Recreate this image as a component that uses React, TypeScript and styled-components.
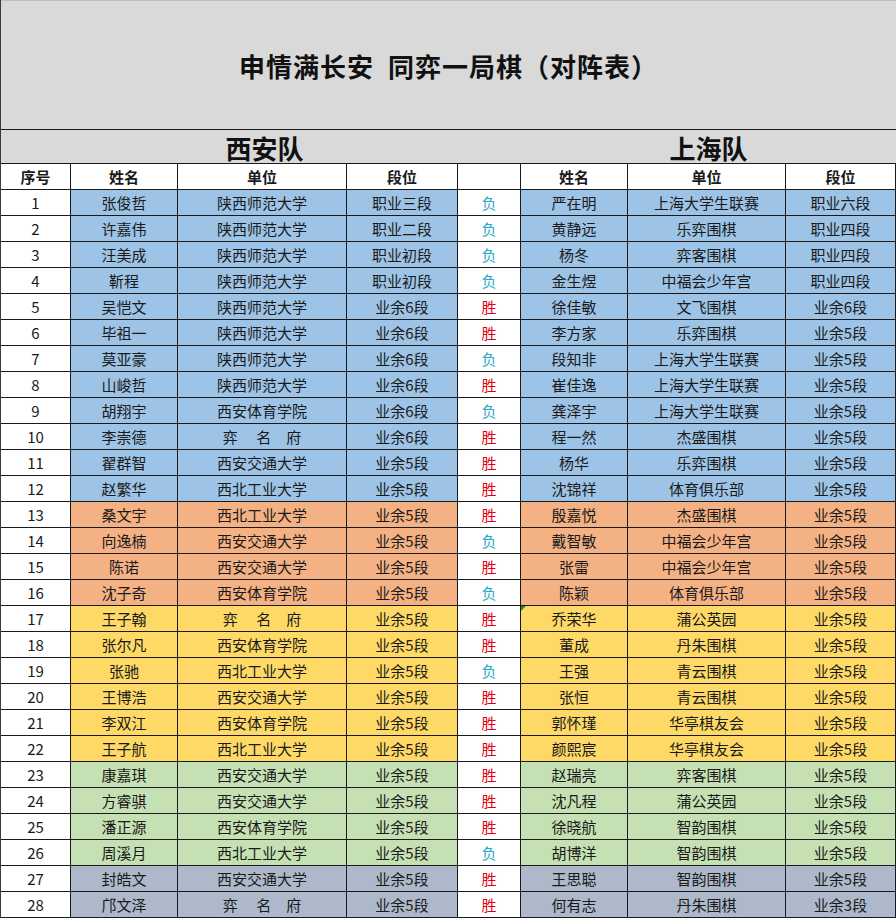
import React from "react";
import styled, { createGlobalStyle } from "styled-components";

const GlobalStyle = createGlobalStyle`
  body {
    margin: 0;
    background: #ffffff;
    font-family: "Noto Sans CJK SC", "Noto Sans", sans-serif;
  }
`;

const COLUMNS = "70px 107px 169px 111px 63px 107px 158px 110px";

const GROUP_COLORS: Record<string, string> = {
  blue: "#9dc3e6",
  orange: "#f4b183",
  yellow: "#ffd966",
  green: "#c5e0b3",
  slate: "#adb9ca",
};

const Sheet = styled.div`
  width: 896px;
  border-left: 1px solid #3a3a3a;
  box-sizing: border-box;
`;

const TitleBar = styled.div`
  height: 130px;
  background: #d9d9d9;
  border-top: 1px solid #bcbcbc;
  border-bottom: 1px solid #1a1a1a;
  box-sizing: border-box;
  display: flex;
  align-items: center;
  justify-content: center;
`;

const Title = styled.h1`
  margin: 0;
  font-size: 26px;
  font-weight: 700;
  color: #111;
  white-space: pre;
  letter-spacing: 1px;
`;

const TeamRow = styled.div`
  height: 34px;
  background: #d9d9d9;
  border-bottom: 1px solid #1a1a1a;
  box-sizing: border-box;
  display: grid;
  grid-template-columns: 70px 387px 63px 375px;
`;

const TeamName = styled.div`
  display: flex;
  align-items: flex-end;
  justify-content: center;
  font-size: 26px;
  font-weight: 700;
  color: #111;
  line-height: 1;
  padding-bottom: 2px;
`;

const Row = styled.div`
  display: grid;
  grid-template-columns: ${COLUMNS};
  height: 26px;
`;

const Cell = styled.div<{ $bg?: string; $color?: string; $bold?: boolean; $flag?: boolean }>`
  position: relative;
  box-sizing: border-box;
  border-right: 1px solid #1a1a1a;
  border-bottom: 1px solid #1a1a1a;
  background: ${(p) => p.$bg || "#ffffff"};
  color: ${(p) => p.$color || "#1a1a1a"};
  font-size: 15px;
  font-weight: ${(p) => (p.$bold ? 700 : 400)};
  display: flex;
  align-items: center;
  justify-content: center;
  white-space: pre;
  line-height: 1;

  ${(p) =>
    p.$flag &&
    `
    &::before {
      content: "";
      position: absolute;
      left: 0;
      top: 0;
      border-top: 5px solid #1f8a3a;
      border-right: 5px solid transparent;
    }
  `}
`;

type Match = {
  no: number;
  group: keyof typeof GROUP_COLORS;
  xName: string;
  xUnit: string;
  xRank: string;
  result: "胜" | "负";
  sName: string;
  sUnit: string;
  sRank: string;
};

const YMF = "弈\u3000 名\u3000府";

const raw: [string, string, string, "胜" | "负", string, string, string][] = [
  ["张俊哲", "陕西师范大学", "职业三段", "负", "严在明", "上海大学生联赛", "职业六段"],
  ["许嘉伟", "陕西师范大学", "职业二段", "负", "黄静远", "乐弈围棋", "职业四段"],
  ["汪美成", "陕西师范大学", "职业初段", "负", "杨冬", "弈客围棋", "职业四段"],
  ["靳程", "陕西师范大学", "职业初段", "负", "金生煜", "中福会少年宫", "职业四段"],
  ["吴恺文", "陕西师范大学", "业余6段", "胜", "徐佳敏", "文飞围棋", "业余6段"],
  ["毕祖一", "陕西师范大学", "业余6段", "胜", "李方家", "乐弈围棋", "业余5段"],
  ["莫亚豪", "陕西师范大学", "业余6段", "负", "段知非", "上海大学生联赛", "业余5段"],
  ["山峻哲", "陕西师范大学", "业余6段", "胜", "崔佳逸", "上海大学生联赛", "业余5段"],
  ["胡翔宇", "西安体育学院", "业余6段", "负", "龚泽宇", "上海大学生联赛", "业余5段"],
  ["李崇德", YMF, "业余6段", "胜", "程一然", "杰盛围棋", "业余5段"],
  ["翟群智", "西安交通大学", "业余5段", "胜", "杨华", "乐弈围棋", "业余5段"],
  ["赵繁华", "西北工业大学", "业余5段", "胜", "沈锦祥", "体育俱乐部", "业余5段"],
  ["桑文宇", "西北工业大学", "业余5段", "胜", "殷嘉悦", "杰盛围棋", "业余5段"],
  ["向逸楠", "西安交通大学", "业余5段", "负", "戴智敏", "中福会少年宫", "业余5段"],
  ["陈诺", "西安交通大学", "业余5段", "胜", "张雷", "中福会少年宫", "业余5段"],
  ["沈子奇", "西安体育学院", "业余5段", "负", "陈颖", "体育俱乐部", "业余5段"],
  ["王子翰", YMF, "业余5段", "胜", "乔荣华", "蒲公英园", "业余5段"],
  ["张尔凡", "西安体育学院", "业余5段", "胜", "董成", "丹朱围棋", "业余5段"],
  ["张驰", "西北工业大学", "业余5段", "负", "王强", "青云围棋", "业余5段"],
  ["王博浩", "西安交通大学", "业余5段", "胜", "张恒", "青云围棋", "业余5段"],
  ["李双江", "西安体育学院", "业余5段", "胜", "郭怀瑾", "华亭棋友会", "业余5段"],
  ["王子航", "西北工业大学", "业余5段", "胜", "颜熙宸", "华亭棋友会", "业余5段"],
  ["康嘉琪", "西安交通大学", "业余5段", "胜", "赵瑞亮", "弈客围棋", "业余5段"],
  ["方睿骐", "西安交通大学", "业余5段", "胜", "沈凡程", "蒲公英园", "业余5段"],
  ["潘正源", "西安体育学院", "业余5段", "胜", "徐晓航", "智韵围棋", "业余5段"],
  ["周溪月", "西北工业大学", "业余5段", "负", "胡博洋", "智韵围棋", "业余5段"],
  ["封皓文", "西安交通大学", "业余5段", "胜", "王思聪", "智韵围棋", "业余5段"],
  ["邝文泽", YMF, "业余5段", "胜", "何有志", "丹朱围棋", "业余3段"],
];

const groupOf = (no: number): keyof typeof GROUP_COLORS => {
  if (no <= 12) return "blue";
  if (no <= 16) return "orange";
  if (no <= 22) return "yellow";
  if (no <= 26) return "green";
  return "slate";
};

const matches: Match[] = raw.map((r, i) => ({
  no: i + 1,
  group: groupOf(i + 1),
  xName: r[0],
  xUnit: r[1],
  xRank: r[2],
  result: r[3],
  sName: r[4],
  sUnit: r[5],
  sRank: r[6],
}));

const RESULT_COLOR = { 胜: "#e3000f", 负: "#2ea7cc" };

export default function App() {
  return (
    <>
      <GlobalStyle />
      <Sheet>
        <TitleBar>
          <Title>{"申情满长安  同弈一局棋（对阵表）"}</Title>
        </TitleBar>
        <TeamRow>
          <div />
          <TeamName>西安队</TeamName>
          <div />
          <TeamName>上海队</TeamName>
        </TeamRow>
        <Row>
          <Cell $bold>序号</Cell>
          <Cell $bold>姓名</Cell>
          <Cell $bold>单位</Cell>
          <Cell $bold>段位</Cell>
          <Cell />
          <Cell $bold>姓名</Cell>
          <Cell $bold>单位</Cell>
          <Cell $bold>段位</Cell>
        </Row>
        {matches.map((m) => {
          const bg = GROUP_COLORS[m.group];
          return (
            <Row key={m.no}>
              <Cell>{m.no}</Cell>
              <Cell $bg={bg}>{m.xName}</Cell>
              <Cell $bg={bg}>{m.xUnit}</Cell>
              <Cell $bg={bg}>{m.xRank}</Cell>
              <Cell $color={RESULT_COLOR[m.result]}>{m.result}</Cell>
              <Cell $bg={bg} $flag={m.no === 17}>
                {m.sName}
              </Cell>
              <Cell $bg={bg}>{m.sUnit}</Cell>
              <Cell $bg={bg}>{m.sRank}</Cell>
            </Row>
          );
        })}
      </Sheet>
    </>
  );
}
